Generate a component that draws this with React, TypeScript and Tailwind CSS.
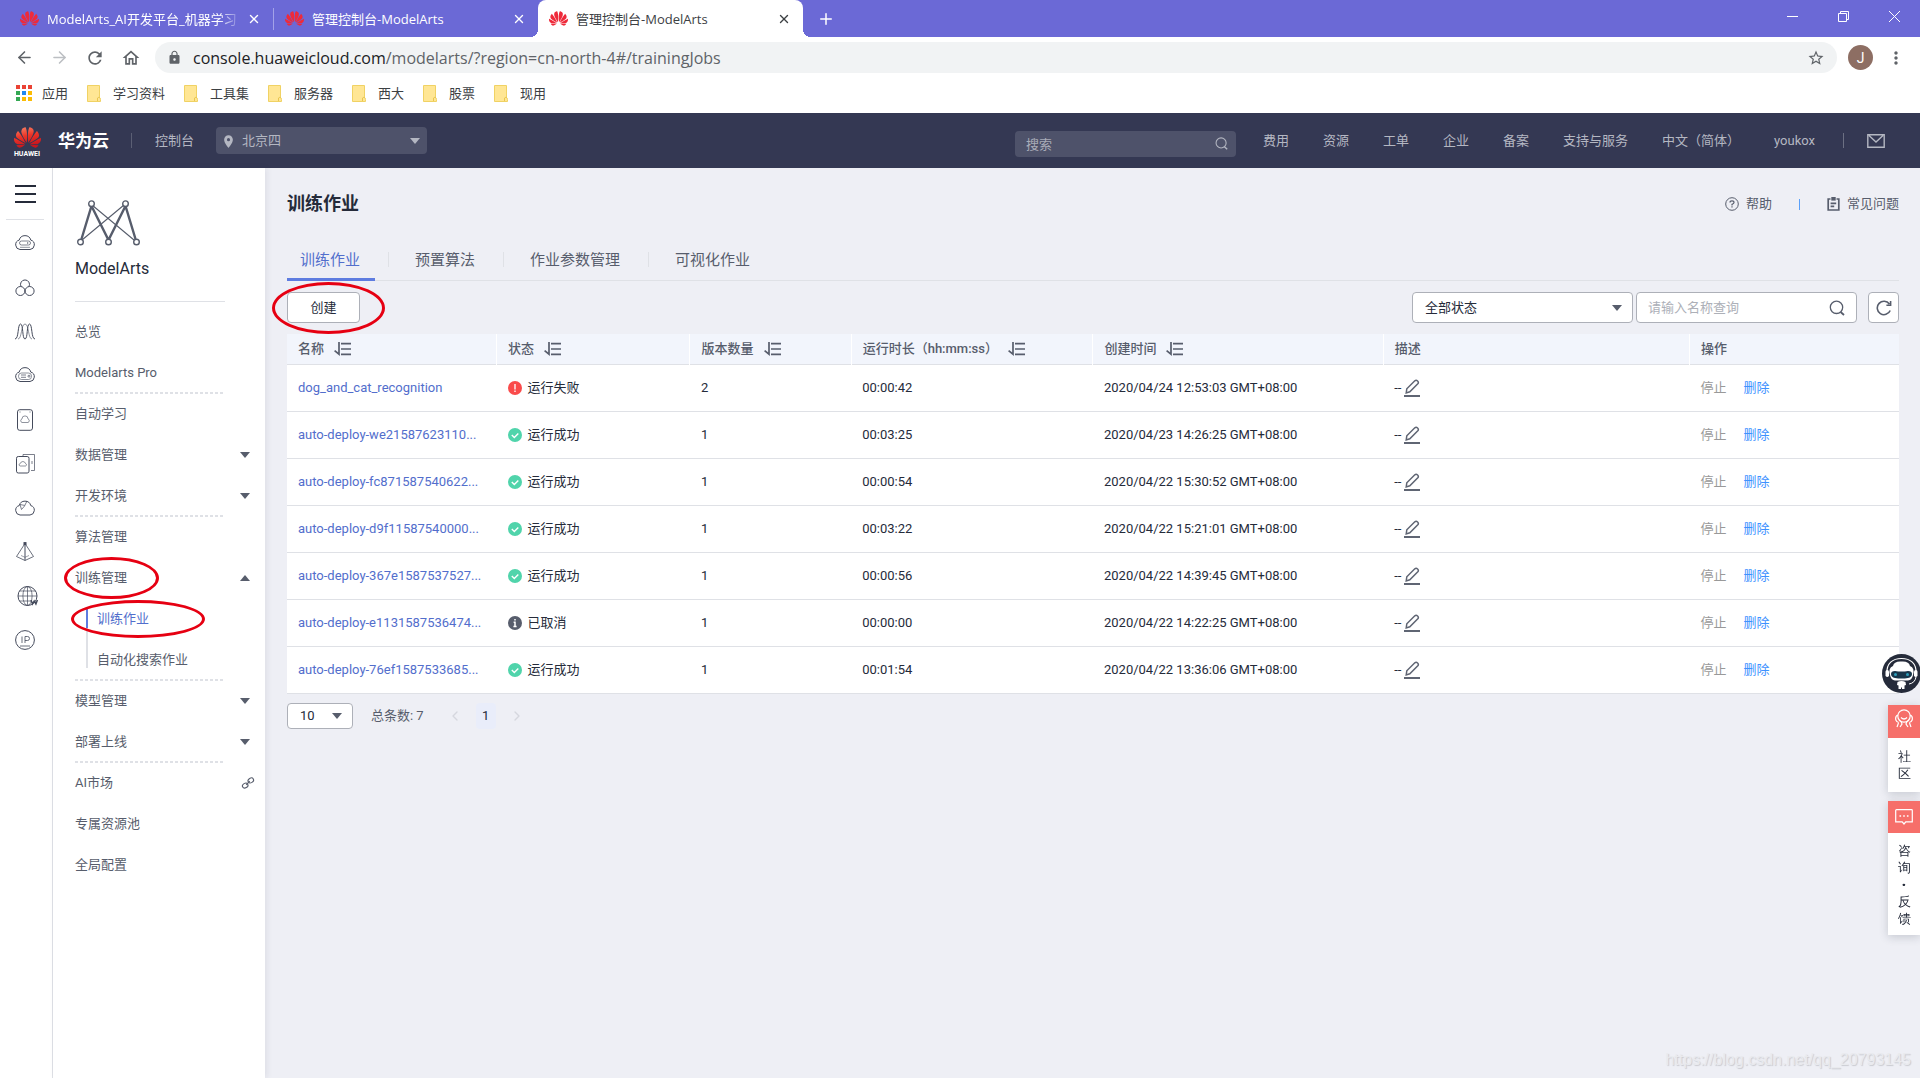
import { ReactNode } from "react";
import clsx from "clsx";
import { ArrowLeft, ArrowRight, ChevronLeft, ChevronRight, Plus, X } from "lucide-react";
import {
  MdLocationOn,
  MdLock,
  MdMoreVert,
  MdOutlineHome,
  MdRefresh,
  MdStarBorder,
} from "react-icons/md";
import { SiHuawei } from "react-icons/si";

type Status = "failed" | "success" | "cancelled";

interface Job {
  name: string;
  status: Status;
  versions: number;
  duration: string;
  created: string;
}

interface MenuItem {
  label: string;
  arrow?: "down" | "up";
  external?: boolean;
  divider?: boolean;
  circled?: boolean;
  children?: { label: string; active?: boolean; circled?: boolean }[];
}

const jobs: Job[] = [
  { name: "dog_and_cat_recognition", status: "failed", versions: 2, duration: "00:00:42", created: "2020/04/24 12:53:03 GMT+08:00" },
  { name: "auto-deploy-we21587623110...", status: "success", versions: 1, duration: "00:03:25", created: "2020/04/23 14:26:25 GMT+08:00" },
  { name: "auto-deploy-fc871587540622...", status: "success", versions: 1, duration: "00:00:54", created: "2020/04/22 15:30:52 GMT+08:00" },
  { name: "auto-deploy-d9f11587540000...", status: "success", versions: 1, duration: "00:03:22", created: "2020/04/22 15:21:01 GMT+08:00" },
  { name: "auto-deploy-367e1587537527...", status: "success", versions: 1, duration: "00:00:56", created: "2020/04/22 14:39:45 GMT+08:00" },
  { name: "auto-deploy-e1131587536474...", status: "cancelled", versions: 1, duration: "00:00:00", created: "2020/04/22 14:22:25 GMT+08:00" },
  { name: "auto-deploy-76ef1587533685...", status: "success", versions: 1, duration: "00:01:54", created: "2020/04/22 13:36:06 GMT+08:00" },
];

const statusLabels: Record<Status, string> = {
  failed: "运行失败",
  success: "运行成功",
  cancelled: "已取消",
};

const columns = [
  { label: "名称", sort: true, width: "w-[13%]" },
  { label: "状态", sort: true, width: "w-[12%]" },
  { label: "版本数量", sort: true, width: "w-[10%]" },
  { label: "运行时长（hh:mm:ss）", sort: true, width: "w-[15%]" },
  { label: "创建时间", sort: true, width: "w-[18%]" },
  { label: "描述", sort: false, width: "w-[19%]" },
  { label: "操作", sort: false, width: "w-[13%]" },
];

const menu: MenuItem[] = [
  { label: "总览" },
  { label: "Modelarts Pro", divider: true },
  { label: "自动学习" },
  { label: "数据管理", arrow: "down" },
  { label: "开发环境", arrow: "down", divider: true },
  { label: "算法管理" },
  {
    label: "训练管理",
    arrow: "up",
    divider: true,
    circled: true,
    children: [
      { label: "训练作业", active: true, circled: true },
      { label: "自动化搜索作业" },
    ],
  },
  { label: "模型管理", arrow: "down" },
  { label: "部署上线", arrow: "down", divider: true },
  { label: "AI市场", external: true },
  { label: "专属资源池" },
  { label: "全局配置" },
];

const bookmarks = ["学习资料", "工具集", "服务器", "西大", "股票", "现用"];
const headerLinks = ["费用", "资源", "工单", "企业", "备案", "支持与服务", "中文（简体）"];
const tabs = ["训练作业", "预置算法", "作业参数管理", "可视化作业"];

/* ---------- small drawings ---------- */

function Triangle({ up, className }: { up?: boolean; className?: string }) {
  return (
    <svg width="10" height="6" viewBox="0 0 10 6" className={className} aria-hidden="true">
      <path d={up ? "M5 0l5 6H0z" : "M0 0h10L5 6z"} fill="currentColor" />
    </svg>
  );
}

function SearchIcon({ size }: { size: number }) {
  return (
    <svg width={size} height={size} viewBox="0 0 16 16" fill="none" stroke="currentColor" strokeWidth="1.3" aria-hidden="true">
      <circle cx="7.5" cy="7.3" r="6.2" />
      <path d="M11.6 12l3.4 3" strokeWidth="1.8" />
    </svg>
  );
}

function SortIcon() {
  return (
    <svg width="17" height="14" viewBox="0 0 17 14" fill="none" stroke="currentColor" strokeWidth="1.7" aria-hidden="true">
      <path d="M5 0v12.2L.6 8.6M7 1.6h10M7 7h10M7 12.4h10" />
    </svg>
  );
}

function PenIcon() {
  return (
    <svg width="16" height="18" viewBox="0 0 16 18" fill="none" stroke="#5f6573" strokeWidth="1.5" aria-hidden="true">
      <path d="M2.200 14l.6-4.200 8-8q1.400-1 2.800.2t.2 2.800l-8 8z" />
      <path d="M0 17h16" strokeWidth="2" />
    </svg>
  );
}

function StatusIcon({ status }: { status: Status }) {
  if (status === "failed") {
    return (
      <svg width="14" height="14" viewBox="0 0 14 14" aria-hidden="true">
        <circle cx="7" cy="7" r="7" fill="#fa4b4b" />
        <path d="M7 3v5.4M7 9.6v1.4" stroke="#fff" strokeWidth="1.3" />
      </svg>
    );
  }
  if (status === "success") {
    return (
      <svg width="14" height="14" viewBox="0 0 14 14" aria-hidden="true">
        <circle cx="7" cy="7" r="7" fill="#50d4ab" />
        <path d="M3.8 7l2.5 2.4 4-4" stroke="#fff" strokeWidth="1.4" fill="none" />
      </svg>
    );
  }
  return (
    <svg width="14" height="14" viewBox="0 0 14 14" aria-hidden="true">
      <circle cx="7" cy="7" r="7" fill="#575d6c" />
      <path d="M7 3v1.6M5.6 6.2H7v4.6M5.4 10.6h3.2" stroke="#fff" strokeWidth="1.5" fill="none" />
    </svg>
  );
}

function FolderIcon() {
  return (
    <svg width="14" height="17" viewBox="0 0 14 17" aria-hidden="true">
      <path d="M.5.5h12v12q1 .4 1 2v2H.5z" fill="#ffe694" stroke="#f0d264" />
      <path d="M10.5 16v-3q1.4-1.4 2.6 0" fill="none" stroke="#e9c64f" />
    </svg>
  );
}

function AppsIcon() {
  const fills = ["#ea4335", "#ea4335", "#ea4335", "#34a853", "#1e88f5", "#fbbc05", "#34a853", "#fbbc05", "#fbbc05"];
  return (
    <svg width="16" height="16" viewBox="0 0 16 16" aria-hidden="true">
      {fills.map((f, i) => (
        <rect key={i} x={(i % 3) * 6} y={Math.floor(i / 3) * 6} width="4" height="4" fill={f} />
      ))}
    </svg>
  );
}

function ModelArtsLogo() {
  return (
    <svg width="64" height="46" viewBox="0 0 64 46" fill="none" stroke="#575d6c" aria-hidden="true">
      <path d="M4.500 39L14.500 6l17 34L48.500 6l10 33" strokeWidth="2.4" />
      <path d="M5 40L47 5M57 40L15 5" strokeWidth="1.1" />
      <g fill="#fff" strokeWidth="1.4">
        <circle cx="14.5" cy="3.7" r="2.8" />
        <circle cx="48.5" cy="3.7" r="2.8" />
        <circle cx="3.5" cy="42" r="2.8" />
        <circle cx="31.5" cy="42" r="2.8" />
        <circle cx="59.5" cy="42" r="2.8" />
      </g>
    </svg>
  );
}

const cloud = "M6 16.500a4.8 4.8 0 0 1-.8-9.4 6 6 0 0 1 11.6 0 4.8 4.8 0 0 1-.8 9.4z";

const railIcons: { label: string; icon: ReactNode }[] = [
  { label: "弹性云服务器", icon: <><path d={cloud} /><rect x="5.5" y="8" width="11" height="4" rx="2" strokeWidth=".7" /><path d="M6 14.3h10" strokeWidth=".6" /><circle cx="13.8" cy="10" r=".3" /></> },
  { label: "裸金属服务器", icon: <><path d="M7 9.5a4.5 4.5 0 1 1 8 0" /><circle cx="6.4" cy="14" r="4.5" /><circle cx="15.6" cy="14" r="4.5" /></> },
  { label: "弹性伸缩", icon: <><path d="M1 18C5 18 3.500 3 6.500 3S8 18 11 18 12.500 3 15.500 3 17 18 21 18" /><path d="M4 18C8 18 7 3 11 3s3 15 7 15" strokeWidth=".6" /></> },
  { label: "云容器引擎", icon: <><path d={cloud} /><rect x="4.500" y="8" width="13" height="6.500" rx="3" strokeWidth=".6" /><path d="M7 10h5M7 12.300h5" strokeWidth=".7" /><circle cx="15" cy="11.200" r="1" strokeWidth=".7" /></> },
  { label: "云硬盘", icon: <><rect x="3.500" y=".7" width="15" height="20.600" rx="2.200" /><path d="M8 13.500h6a1.900 1.900 0 0 0 0-3.600 3 3 0 0 0-6 0 1.900 1.900 0 0 0 0 3.600z" strokeWidth=".6" /><path d="M5.500 3h1M15.500 3h1" strokeWidth=".8" /></> },
  { label: "云备份", icon: <><path d="M9 3V1.500h11.500v16H17" strokeWidth=".7" /><rect x="2.500" y="3.500" width="12.500" height="16.500" rx="1.800" /><path d="M6 13h5.500a1.300 1.300 0 0 0 0-2.500 2.700 2.700 0 0 0-5.200 0A1.300 1.300 0 0 0 6 13z" strokeWidth=".6" /><path d="M18 8v3" strokeWidth=".7" /></> },
  { label: "对象存储", icon: <><path d="M6 18a4.800 4.800 0 0 1-.8-9.400 6 6 0 0 1 11.600 0A4.800 4.800 0 0 1 16 18z" /><path d="M6 7.500l5 1-3.500 4zM13 4l-2 4" strokeWidth=".7" /></> },
  { label: "虚拟私有云", icon: <><path d="M11 2.500L2.500 15.500 11 19.500l8.500-4z" strokeWidth=".8" /><path d="M11 3v16.500" /><path d="M7 14.500l4 1.800 4-1.800" strokeWidth=".5" /><rect x="10" y="1.600" width="2" height="2" fill="currentColor" /></> },
  { label: "域名注册", icon: <><circle cx="13.500" cy="11" r="9.500" /><ellipse cx="13.500" cy="11" rx="4.600" ry="9.500" strokeWidth=".7" /><path d="M13.500 1.500v19M4 11h19M5.500 6h16M5.500 16h12" strokeWidth=".7" /><path d="M17 15l1.500 4 1.700-3 1.700 3 1.500-4" strokeWidth="1.500" /></> },
  { label: "弹性公网IP", icon: <><circle cx="11" cy="11" r="9.400" /><path d="M8 7.500v6.500M11 14V7.500h2.500a2 2 0 0 1 0 4H11M6 17h10" strokeWidth=".8" /></> },
];

/* Hand-drawn style highlight ring */
function Ring({ className }: { className: string }) {
  return <span aria-hidden="true" className={clsx("pointer-events-none absolute z-10 rounded-[50%] border-[3px] border-[#e60012]", className)} />;
}

/* ---------- browser chrome ---------- */

function BrowserTab({ title, active, fade }: { title: string; active?: boolean; fade?: boolean }) {
  return (
    <div
      className={clsx(
        "flex h-full items-center px-[11px]",
        active ? "relative w-[265px] rounded-t-lg bg-white text-[#3c4043]" : "w-[264px] text-white",
      )}
    >
      {active && (
        <>
          <span className="absolute bottom-0 -left-2 size-2 bg-[radial-gradient(circle_at_0_0,transparent_8px,#fff_8px)]" />
          <span className="absolute -right-2 bottom-0 size-2 bg-[radial-gradient(circle_at_100%_0,transparent_8px,#fff_8px)]" />
        </>
      )}
      <SiHuawei size={19} className="mr-2 shrink-0 text-[#ee2a3a]" />
      <span
        className={clsx(
          "flex-1 overflow-hidden whitespace-nowrap text-[13px] leading-5",
          fade && "mr-1 [mask-image:linear-gradient(90deg,#000_88%,transparent)]",
        )}
      >
        {title}
      </span>
      <button aria-label="关闭标签页" className="flex size-4 items-center justify-center">
        <X size={14} strokeWidth={2.4} />
      </button>
    </div>
  );
}

function Browser() {
  return (
    <div className="font-['Open_Sans','Noto_Sans_CJK_SC',sans-serif]">
      <div className="flex h-[37px] items-center bg-[#6b69d6] pl-[9px]">
        <BrowserTab title="ModelArts_AI开发平台_机器学习" fade />
        <span className="h-[22px] w-px bg-[#a3a2e8]" />
        <BrowserTab title="管理控制台-ModelArts" />
        <BrowserTab title="管理控制台-ModelArts" active />
        <button aria-label="新标签页" className="ml-[14px] text-white">
          <Plus size={18} strokeWidth={2} />
        </button>
        <div className="ml-auto flex items-center gap-10 pr-5 pb-1 text-white">
          <button aria-label="最小化">
            <svg width="11" height="11" viewBox="0 0 11 11" stroke="currentColor"><path d="M0 5.500h11" /></svg>
          </button>
          <button aria-label="还原">
            <svg width="11" height="11" viewBox="0 0 11 11" fill="none" stroke="currentColor"><path d="M.5 2.500h8v8h-8zM2.500 2.500v-2h8v8h-2" /></svg>
          </button>
          <button aria-label="关闭">
            <svg width="11" height="11" viewBox="0 0 11 11" stroke="currentColor"><path d="M0 0l11 11M11 0L0 11" /></svg>
          </button>
        </div>
      </div>

      <div className="flex items-center bg-white pt-[5px] text-[#5f6368]">
        <div className="flex w-[155px] items-center gap-4 pl-[15px]">
          <button aria-label="后退"><ArrowLeft size={19} /></button>
          <button aria-label="前进" className="text-[#bcbfc3]"><ArrowRight size={19} /></button>
          <button aria-label="重新加载"><MdRefresh size={20} /></button>
          <button aria-label="主页"><MdOutlineHome size={20} /></button>
        </div>
        <div className="flex h-[31px] flex-1 items-center rounded-full bg-[#f1f3f4] pr-3 pl-3">
          <MdLock size={15} className="mr-[11px]" />
          <span className="flex-1 text-base leading-5">
            <span className="text-[#202124]">console.huaweicloud.com</span>
            /modelarts/?region=cn-north-4#/trainingJobs
          </span>
          <button aria-label="收藏"><MdStarBorder size={18} /></button>
        </div>
        <button aria-label="账户" className="ml-[11px] flex size-[25px] items-center justify-center rounded-full bg-[#8d6e63] font-[Roboto] text-sm leading-5 text-white">
          J
        </button>
        <button aria-label="更多" className="mr-[14px] ml-[13px]"><MdMoreVert size={20} /></button>
      </div>

      <nav className="flex h-10 items-center bg-white pl-4 text-[13px] leading-5 text-[#3c4043]">
        <a href="#" className="flex items-center gap-[10px]"><AppsIcon />应用</a>
        {bookmarks.map((b) => (
          <a key={b} href="#" className="ml-[19px] flex items-center gap-3"><FolderIcon />{b}</a>
        ))}
      </nav>
    </div>
  );
}

/* ---------- console header ---------- */

function Header() {
  return (
    <header className="flex h-[55px] items-center bg-[#343853] text-[13px] leading-5 text-[#b4b7c2]">
      <svg width="0" height="0" className="absolute" aria-hidden="true">
        <linearGradient id="petal" x1="0" y1="0" x2="0.3" y2="1">
          <stop offset="0" stopColor="#fa8a6c" />
          <stop offset="0.5" stopColor="#ea3528" />
          <stop offset="1" stopColor="#c8151d" />
        </linearGradient>
      </svg>
      <div className="flex w-[54px] flex-col items-center text-white">
        <SiHuawei size={27} fill="url(#petal)" />
        <span className="text-[7px] leading-[7px] font-bold">HUAWEI</span>
      </div>
      <span className="ml-1 text-[17px] leading-6 font-bold text-white">华为云</span>
      <span className="ml-[22px] h-[15px] w-px bg-[#5b5f74]" />
      <a href="#" className="ml-[23px]">控制台</a>
      <div className="relative ml-[22px] w-[211px]">
        <MdLocationOn size={15} className="absolute top-[7px] left-[5px]" />
        <select aria-label="区域" className="h-[27px] w-full appearance-none rounded-sm bg-[#4e526a] pl-[26px] outline-none">
          <option>北京四</option>
        </select>
        <Triangle className="pointer-events-none absolute top-[11px] right-[7px]" />
      </div>
      <div className="relative mt-[7px] ml-auto w-[221px]">
        <input
          aria-label="搜索"
          placeholder="搜索"
          className="block h-[26px] w-full rounded-sm bg-[#4e526a] pl-[11px] outline-none placeholder:text-[#a9acb8]"
        />
        <button aria-label="提交搜索" className="absolute top-[6px] right-2">
          <SearchIcon size={13} />
        </button>
      </div>
      <nav className="ml-[27px] flex items-center gap-[34px]">
        {headerLinks.map((l) => (
          <a key={l} href="#">{l}</a>
        ))}
        <a href="#">youkox</a>
      </nav>
      <span className="ml-7 h-[15px] w-px bg-[#6c7083]" />
      <button aria-label="消息" className="mr-[35px] ml-[23px]">
        <svg width="18" height="14" viewBox="0 0 18 14" fill="none" stroke="currentColor" strokeWidth="1.4">
          <path d="M.8.8h16.400v12.400H.8zM2 1.500l7 6.500 7-6.500" />
        </svg>
      </button>
    </header>
  );
}

/* ---------- left side ---------- */

function Rail() {
  return (
    <nav aria-label="服务" className="flex w-[53px] flex-col items-center border-r border-[#dfe1e6] bg-white pr-[2px] text-[#454b5c]">
      <button aria-label="菜单" className="flex h-[52px] w-[38px] items-center justify-center border-b border-[#dfe1e6]">
        <svg width="21" height="18" viewBox="0 0 21 18" stroke="#252b3a" strokeWidth="2"><path d="M0 1h21M0 9h21M0 17h21" /></svg>
      </button>
      <div className="mt-[2px] flex flex-col">
        {railIcons.map((r) => (
          <button key={r.label} aria-label={r.label} className="flex h-11 w-10 items-center justify-center">
            <svg width="22" height="22" viewBox="0 0 22 22" fill="none" stroke="currentColor" strokeWidth="1" className="overflow-visible">
              {r.icon}
            </svg>
          </button>
        ))}
      </div>
    </nav>
  );
}

function Sidebar() {
  return (
    <aside className="relative z-10 w-[212px] bg-white pl-[22px] text-[13px] leading-5 text-[#575d6c] shadow-[2px_0_6px_rgba(37,43,58,0.08)]">
      <div className="w-[150px] border-b border-[#dfe1e6] pt-8 pb-5">
        <div className="pl-[2px]"><ModelArtsLogo /></div>
        <h2 className="mt-[11px] text-base leading-6 text-[#252b3a]">ModelArts</h2>
      </div>
      <ul className="mt-[9px]">
        {menu.map((item) => (
          <li key={item.label}>
            <div className="relative">
              <button className="flex h-[41px] w-full items-center justify-between pr-[15px] text-left">
                {item.label}
                {item.arrow && <Triangle up={item.arrow === "up"} />}
                {item.external && (
                  <svg width="12" height="12" viewBox="0 0 12 12" fill="none" stroke="currentColor" strokeWidth="1.100" className="-mr-1 overflow-visible">
                    <ellipse cx="3.200" cy="8.600" rx="2.900" ry="2.300" transform="rotate(-30 3.200 8.600)" />
                    <ellipse cx="8.800" cy="3.400" rx="2.900" ry="2.300" transform="rotate(-30 8.800 3.400)" />
                    <path d="M4.200 7.800l3.600-3.600" />
                  </svg>
                )}
              </button>
              {item.circled && <Ring className="top-0 -left-[11px] h-[42px] w-[95px]" />}
            </div>
            {item.children && (
              <ul className="relative">
                <li aria-hidden="true" className="absolute top-[10px] left-[11px] h-[60px] w-[2px] bg-[#dfe1e6]">
                  <span className="block h-5 bg-[#5e7ce0]" />
                </li>
                {item.children.map((c) => (
                  <li key={c.label} className="relative">
                    <a href="#" className={clsx("flex h-[41px] items-center pl-[22px]", c.active && "text-[#526ecc]")}>
                      {c.label}
                    </a>
                    {c.circled && <Ring className="top-[2px] -left-1 h-[38px] w-[134px]" />}
                  </li>
                ))}
              </ul>
            )}
            {item.divider && (
              <div className="-my-px h-[2px] w-[150px] bg-[repeating-linear-gradient(90deg,#dfe1e6_0_3px,transparent_3px_5px)]" />
            )}
          </li>
        ))}
      </ul>
    </aside>
  );
}

/* ---------- main area ---------- */

function Toolbar() {
  return (
    <div className="mt-[11px] flex h-[31px] items-center">
      <div className="relative">
        <button className="block h-[31px] w-[73px] rounded-sm border border-[#adb0b8] bg-white text-[#252b3a]">创建</button>
        <Ring className="-top-[10px] -left-[15px] h-[52px] w-[113px]" />
      </div>
      <div className="relative ml-auto w-[221px]">
        <select aria-label="状态" className="block h-[31px] w-full appearance-none rounded-sm border border-[#adb0b8] bg-white pl-3 text-[#252b3a] outline-none">
          <option>全部状态</option>
        </select>
        <Triangle className="pointer-events-none absolute top-[13px] right-[11px]" />
      </div>
      <div className="relative ml-[3px] w-[221px]">
        <input
          aria-label="名称查询"
          placeholder="请输入名称查询"
          className="block h-[31px] w-full rounded-sm border border-[#adb0b8] bg-white pl-[11px] outline-none placeholder:text-[#adb0b8]"
        />
        <button aria-label="查询" className="absolute top-2 right-3"><SearchIcon size={16} /></button>
      </div>
      <button aria-label="刷新" className="ml-[11px] flex h-[31px] w-[31px] items-center justify-center rounded-sm border border-[#adb0b8] bg-white">
        <svg width="16" height="16" viewBox="0 0 16 16" fill="none" stroke="currentColor" strokeWidth="1.600">
          <path d="M14.200 10.500A6.700 6.700 0 1 1 13.400 4M14.600 1v4.200h-4.200" />
        </svg>
      </button>
    </div>
  );
}

function JobTable() {
  return (
    <table className="mt-[11px] w-full table-fixed border-collapse text-left">
      <thead>
        <tr className="h-[30px] border-b border-[#dfe1e6] bg-[#f2f5fc]">
          {columns.map((c, i) => (
            <th key={c.label} className={clsx("pl-[11px] font-medium", c.width, i > 0 && "border-l border-white")}>
              <span className="flex items-center gap-[10px]">
                {c.label}
                {c.sort && <SortIcon />}
              </span>
            </th>
          ))}
        </tr>
      </thead>
      <tbody>
        {jobs.map((job) => (
          <tr key={job.name} className="h-[47px] border-b border-[#dfe1e6] bg-white text-[#252b3a]">
            <td className="truncate pl-[11px]"><a href="#" className="text-[#526ecc]">{job.name}</a></td>
            <td className="pl-[11px]">
              <span className="flex items-center gap-[6px]"><StatusIcon status={job.status} />{statusLabels[job.status]}</span>
            </td>
            <td className="pl-[11px]">{job.versions}</td>
            <td className="pl-[11px]">{job.duration}</td>
            <td className="pl-[11px]">{job.created}</td>
            <td className="pl-[11px]">
              <span className="flex items-center gap-[3px]">
                --
                <button aria-label="编辑描述"><PenIcon /></button>
              </span>
            </td>
            <td className="pl-[11px]">
              <button disabled className="text-[#999]">停止</button>
              <button className="ml-[17px] text-[#3d91ff]">删除</button>
            </td>
          </tr>
        ))}
      </tbody>
    </table>
  );
}

function Pagination() {
  return (
    <div className="mt-[9px] flex h-[26px] items-center">
      <div className="relative w-[66px]">
        <select aria-label="每页条数" className="block h-[26px] w-full appearance-none rounded-sm border border-[#adb0b8] bg-white pl-3 text-[#252b3a] outline-none">
          <option>10</option>
        </select>
        <Triangle className="pointer-events-none absolute top-[10px] right-[11px]" />
      </div>
      <span className="ml-[18px]">总条数: 7</span>
      <button aria-label="上一页" className="ml-[23px] text-[#d5d7de]"><ChevronLeft size={16} strokeWidth={2} /></button>
      <button className="ml-[13px] h-[26px] w-5 rounded-sm bg-[#e9edfa] text-[#252b3a]">1</button>
      <button aria-label="下一页" className="ml-[13px] text-[#d5d7de]"><ChevronRight size={16} strokeWidth={2} /></button>
    </div>
  );
}

function FloatingPanel() {
  return (
    <div className="fixed top-[654px] right-0 z-20 flex flex-col items-end text-[13px] leading-[17px] text-[#252b3a]">
      <button aria-label="智能客服" className="w-[38px]">
        <svg width="39" height="39" viewBox="0 0 39 39">
          <circle cx="19.500" cy="19.500" r="19.500" fill="#252b3a" />
          <path d="M5 20C4 9 11 4.500 19.500 4.500S35 9 34 20" fill="none" stroke="#fff" strokeWidth="1.200" />
          <path d="M8 21q-2-7 3-9 1-5 8.500-4.500Q27 7 28 12q5 2 3 9-1 5-5 5.500H13Q9 26 8 21z" fill="#fff" />
          <rect x="3.500" y="16" width="3.500" height="7" rx="1.700" fill="#fff" />
          <rect x="32" y="16" width="3.500" height="7" rx="1.700" fill="#fff" />
          <path d="M9 20q0-3 4-3 6.500 1 13 0 4 0 4 3t-4 4q-6.500 1-13 0-4-1-4-4z" fill="#17364a" />
          <circle cx="13.500" cy="20.500" r="1.500" fill="#2b9cb8" />
          <circle cx="25.500" cy="20.500" r="1.500" fill="#2b9cb8" />
          <path d="M15.500 28q4-2 8 0l.5 3-1.500.5V35h-2.500v-1.500h-1V35h-2.500v-3.500L15 31z" fill="#fff" />
          <path d="M34 23q-1 6-7 7" fill="none" stroke="#fff" />
        </svg>
      </button>
      <button className="mt-[12px] w-8 bg-white shadow-[0_2px_10px_rgba(37,43,58,0.2)]">
        <span className="flex h-[33px] justify-center bg-[#f66f6a] pt-1">
          <svg width="18" height="19" viewBox="0 0 18 19" fill="none" stroke="#fff" strokeWidth="1.200">
            <circle cx="9" cy="7" r="6.200" />
            <path d="M6 8.500q3 3 6 0M3 6Q0 7 .8 11q1 2.500 3 2.500M15 6q3 1 2.200 5-1 2.500-3 2.500M4 11q3 2 3 4l-2 3M14 11q-3 2-3 4l2 3M3.500 14L2 18M14.500 14l1.500 4" />
          </svg>
        </span>
        <span className="mx-auto block w-[13px] py-[10px]">社区</span>
      </button>
      <button className="mt-[9px] w-8 bg-white shadow-[0_2px_10px_rgba(37,43,58,0.2)]">
        <span className="flex h-8 items-center justify-center bg-[#f66f6a]">
          <svg width="18" height="16" viewBox="0 0 18 16" fill="none" stroke="#fff" strokeWidth="1.200">
            <path d="M1.500.7h15q.8 0 .8.8v11.300h-6.500L9 15l-1.800-2.200H.7V1.500q0-.8.8-.8z" />
            <path d="M4.500 7h1.600M8.200 7h1.600M11.900 7h1.600" strokeWidth="1.500" />
          </svg>
        </span>
        <span className="mx-auto block w-[13px] pt-[9px] pb-2">
          {["咨", "询", "·", "反", "馈"].map((c) => (
            <span key={c} className={clsx("block text-center", c === "·" && "font-black")}>{c}</span>
          ))}
        </span>
      </button>
    </div>
  );
}

export default function App() {
  return (
    <div className="flex min-h-screen flex-col bg-[#eeeff5]">
      <Browser />
      <div className="flex flex-1 flex-col font-[Roboto,'Noto_Sans_CJK_SC',sans-serif]">
        <Header />
        <div className="flex flex-1">
          <Rail />
          <Sidebar />
          <main className="relative flex-1 pt-6 pr-[21px] pl-[22px] text-[13px] leading-5 text-[#575d6c]">
            <div className="flex items-center">
              <h1 className="text-lg leading-6 font-bold text-[#252b3a]">训练作业</h1>
              <a href="#" className="ml-auto flex items-center gap-[7px]">
                <svg width="14" height="14" viewBox="0 0 14 14" fill="none" stroke="currentColor">
                  <circle cx="7" cy="7" r="6.300" />
                  <path d="M5 5.600Q5 3.800 7 3.800t2 1.700Q9 6.600 7 7.400v1M7 9.300v1.300" strokeWidth="1.200" />
                </svg>
                帮助
              </a>
              <span className="mx-[27px] h-[11px] w-px bg-[#5aa0fa]" />
              <a href="#" className="flex items-center gap-[7px]">
                <svg width="13" height="14" viewBox="0 0 13 14" fill="none" stroke="currentColor" strokeWidth="1.700">
                  <path d="M3.500 2H1.200v11h10.600V2H9.500M3.600 6.300h5.600M3.600 9.300h3.600" />
                  <path d="M4.300 0h4.400v3.600H4.300z" fill="currentColor" stroke="none" />
                </svg>
                常见问题
              </a>
            </div>

            <div role="tablist" className="mt-[25px] flex h-[40px] border-b border-[#dfe1e6] text-[15px]">
              {tabs.map((t, i) => (
                <div key={t} className="flex h-10 items-start">
                  {i > 0 && <span className="mx-[13px] mt-[11px] h-[15px] w-px bg-[#dfe1e6]" />}
                  <button
                    role="tab"
                    aria-selected={i === 0}
                    className={clsx("h-10 border-b-[3px] pr-[15px] pb-0 pl-[13px]", i === 0 ? "border-[#5e7ce0] text-[#526ecc]" : "border-transparent")}
                  >
                    {t}
                  </button>
                </div>
              ))}
            </div>

            <Toolbar />
            <JobTable />
            <Pagination />

            <p className="absolute right-[9px] bottom-[6px] font-['Liberation_Sans',sans-serif] text-base leading-6 text-[#e9eaee] [text-shadow:1px_1px_1px_#c9cad0]">
              https://blog.csdn.net/qq_20793145
            </p>
          </main>
        </div>
      </div>
      <FloatingPanel />
    </div>
  );
}
